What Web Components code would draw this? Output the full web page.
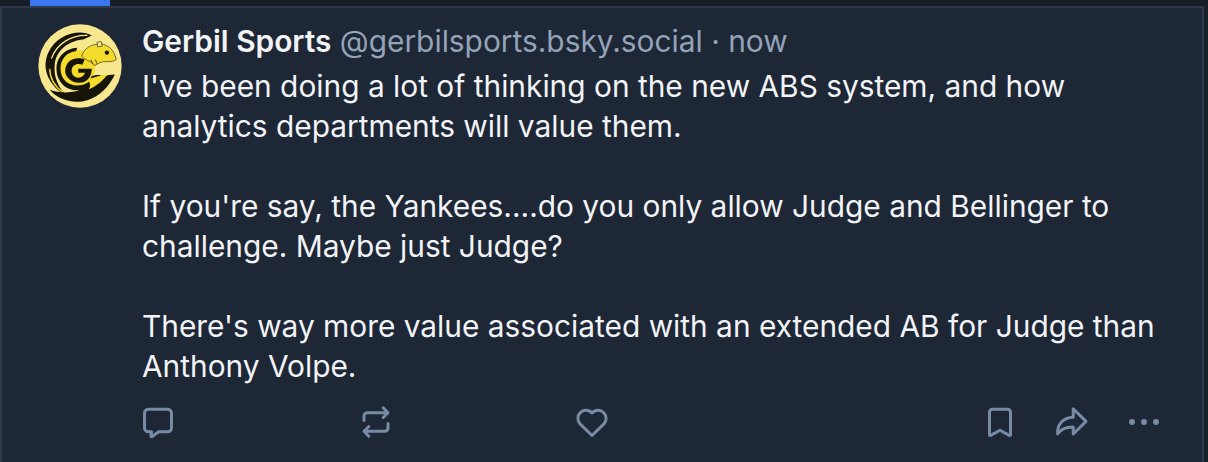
<!DOCTYPE html>
<html><head><meta charset="utf-8"><style>
html,body{margin:0;padding:0;background:#161e27;}
body{width:1208px;height:462px;overflow:hidden;font-family:Inter,sans-serif;}
</style></head><body>
<post-card></post-card>
<script>
const I={
reply:'<path d="M5.500 3.500h13a2.500 2.500 0 0 1 2.500 2.500v10a2.500 2.500 0 0 1-2.500 2.500h-6l-4.400 3.200c-.4.3-.9 0-.8-.5l.4-2.700H5.500A2.500 2.500 0 0 1 3 16V6a2.500 2.500 0 0 1 2.500-2.500Z"/>',
repost:'<path d="M16.800 2.500 20 5.800l-3.200 3.200M19.600 5.800H6.200A2.200 2.200 0 0 0 4 8v3M7.200 21.500 4 18.200l3.200-3.200M4.400 18.200h13.400a2.200 2.200 0 0 0 2.200-2.200v-3"/>',
like:'<path d="M12 21 4.200 13.400a5.300 5.300 0 0 1 0-7.600 5.400 5.400 0 0 1 7.300-.3l.5.5.5-.5a5.400 5.400 0 0 1 7.300.3 5.300 5.300 0 0 1 0 7.600Z"/>',
save:'<path d="M7 3.500h10a2 2 0 0 1 2 2v15c0 .4-.5.7-.8.4L12 17.500l-6.200 3.400c-.3.3-.8 0-.8-.4v-15a2 2 0 0 1 2-2Z"/>',
share:'<path d="M13.500 3.200 22 11.600l-8.500 8.400v-4.600c-4.600-.1-8 1-10.400 4.600-.5-6.500 3.800-11 10.400-11.200Z"/>'
};
class PostCard extends HTMLElement{constructor(){super();this.attachShadow({mode:'open'}).innerHTML=`<style>
:host{display:block;width:1208px;height:462px;box-sizing:border-box;background:#161e27}
.tabs{height:6px;padding-left:30px;box-sizing:border-box}
.tabs i{display:block;width:80px;height:6px;background:#3b76f1}
.frame{box-sizing:border-box;height:456px;width:1204px;background:#1e2736;border-top:2px solid #2e3a4a;border-left:2px solid #2e3a4a;border-right:2px solid #2e3a4a;display:flex;padding:15px 0 0 36px}
</style><div class="tabs"><i></i></div><div class="frame"><post-avatar></post-avatar><post-body></post-body></div>`}}
class PostAvatar extends HTMLElement{constructor(){super();this.attachShadow({mode:'open'}).innerHTML=`<style>
:host{display:block;width:84px;height:84px;margin:1px 20px 0 0;flex:none}
svg{display:block}
</style><svg width="84" height="84" viewBox="115 72 250 250">
<circle cx="240" cy="197" r="124" fill="#f7e78f"/>
<path d="M275 106C240 86 172 100 145 158c-20 47 0 97 60 132-30-28-45-62-40-100 5-40 40-68 85-72Z" fill="#17140a"/>
<path d="M262 106c-47-2-92 24-107 69" fill="none" stroke="#f7e78f" stroke-width="4"/>
<path d="M150 205c0 30 15 53 40 71" fill="none" stroke="#f4dc2c" stroke-width="4"/>
<circle cx="228" cy="205" r="56" fill="#f4dc2c"/>
<path d="M170 205c0-34 26-60 62-62l-4 10c-28 2-46 24-46 52 0 30 22 50 50 50 20 0 34-8 42-20l10 6c-12 18-30 28-54 28-34 0-60-28-60-64Z" fill="#17140a"/>
<path d="M150 268c24 30 72 44 114 30 34-12 60-36 80-76-12 0-24 2-34 6-10-6-24-6-36 0-6 24-26 42-56 46-24 4-46 2-68-6Z" fill="#17140a"/>
<path d="M262 238c18-8 38-14 60-16-10 14-30 34-56 44 6-8 6-18-4-28Z" fill="#f4dc2c"/>
<path d="M196 212c0-22 16-38 38-38 8 0 14 1 20 4l-7 15c-14-6-32 0-32 18 0 16 16 26 30 18 6-3 8-8 10-12h-20v-12h40c0 26-16 42-38 42-24 0-41-18-41-35Z" fill="#17140a"/>
<path d="M245 168c4-18 22-34 48-36 8-2 16-1 22 3 16 4 28 22 33 43-8 6-22 7-38 6-10 2-18 6-26 12-6-12-26-14-39-28Z" fill="#f4dc2c" stroke="#3a3010" stroke-width="2"/>
<circle cx="320" cy="157" r="6.500" fill="#17140a"/>
<path d="M292 140l-1-14 12-2 3 14Z" fill="#f7e78f" stroke="#3a3010" stroke-width="2"/>
<path d="M272 178l6 14M286 178l4 12" stroke="#3a3010" stroke-width="2.500" fill="none"/>
</svg>`}}
class PostBody extends HTMLElement{constructor(){super();this.attachShadow({mode:'open'}).innerHTML=`<style>
:host{display:block;width:1040px;flex:none;font-family:Inter,sans-serif;font-optical-sizing:none;font-variation-settings:"opsz" 14}
.head{display:flex;height:36px;align-items:center;font-size:29.87px;white-space:pre;line-height:36px;margin-bottom:7px}
b{font-weight:600;color:#f1f3f5;}
.m{color:#93a3b8;font-weight:400}
.t{margin:0;color:#f1f3f5;font-size:29.87px;line-height:40px;white-space:pre}
</style><div class="head"><b>Gerbil Sports</b><span class="m"> @gerbilsports.bsky.social · now</span></div><p class="t">I've been doing a lot of thinking on the new ABS system, and how
analytics departments will value them.

If you're say, the Yankees....do you only allow Judge and Bellinger to
challenge. Maybe just Judge?

There's way more value associated with an extended AB for Judge than
Anthony Volpe.</p><post-actions></post-actions>`}}
class PostActions extends HTMLElement{constructor(){super();const ic=(n,x)=>`<svg style="margin-left:${x}px" width="36" height="36" viewBox="0 0 24 24" fill="none" stroke="#788ba5" stroke-width="2" stroke-linejoin="round" stroke-linecap="round">${I[n]}</svg>`;
this.attachShadow({mode:'open'}).innerHTML=`<style>
:host{display:flex;align-items:center;height:36px;margin-top:18px}
svg{display:block;flex:none}
.dots{display:flex;gap:6px;margin-left:40px}.dots i{width:6px;height:6px;border-radius:50%;background:#788ba5}
</style>${ic('reply',-2)}${ic('repost',182)}${ic('like',180)}${ic('save',372)}${ic('share',35)}<div class="dots"><i></i><i></i><i></i></div>`}}
customElements.define('post-actions',PostActions);
customElements.define('post-avatar',PostAvatar);
customElements.define('post-body',PostBody);
customElements.define('post-card',PostCard);
</script></body></html>
